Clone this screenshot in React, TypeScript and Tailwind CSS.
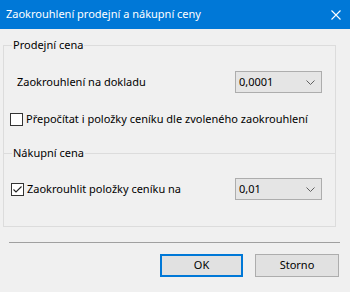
import React from "react";

function Chevron() {
  return (
    <svg width="9" height="5" viewBox="0 0 9 5" className="shrink-0">
      <path d="M0.5 0.5 L4.5 4.5 L8.5 0.5" fill="none" stroke="#606060" strokeWidth="1" />
    </svg>
  );
}

function Combo({ value }: { value: string }) {
  return (
    <div className="flex items-center justify-between w-[87px] h-[22px] border border-[#adadad] bg-[#e5e5e5] pl-[3px] pr-[6px] text-black">
      <span>{value}</span>
      <Chevron />
    </div>
  );
}

function Check({ checked }: { checked?: boolean }) {
  return (
    <div className="w-[13px] h-[13px] border border-[#333333] bg-white flex items-center justify-center shrink-0">
      {checked && (
        <svg width="11" height="11" viewBox="0 0 11 11">
          <path d="M1.5 5.5 L4 8 L9.5 2.5" fill="none" stroke="#222" strokeWidth="1.1" />
        </svg>
      )}
    </div>
  );
}

export default function App() {
  return (
    <div
      className="w-[350px] h-[292px] bg-[#f0f0f0] text-[11px] text-black overflow-hidden flex flex-col"
      style={{ fontFamily: '"Noto Sans", "Liberation Sans", sans-serif' }}
    >
      {/* title bar */}
      <div className="h-[29px] bg-[#0078d7] flex items-center justify-between pl-[6px] pr-[9px] text-white shrink-0">
        <span>Zaokrouhlení prodejní a nákupní ceny</span>
        <svg width="10" height="10" viewBox="0 0 10 10">
          <path d="M0.5 0.5 L9.5 9.5 M9.5 0.5 L0.5 9.5" stroke="white" strokeWidth="1.1" />
        </svg>
      </div>

      <fieldset className="mt-[8px] ml-[3px] w-[333px] border border-[#dcdcdc] px-0 pb-[26px]">
        <legend className="ml-[8px] px-[1px] leading-[16px]">Prodejní cena</legend>

        <div className="flex items-center justify-between mt-[18px] pl-[13px] pr-[13px] h-[22px]">
          <span>Zaokrouhlení na dokladu</span>
          <Combo value="0,0001" />
        </div>

        <div className="flex items-center gap-[3px] mt-[20px] pl-[6px] h-[13px]">
          <Check />
          <span>Přepočítat i položky ceníku dle zvoleného zaokrouhlení</span>
        </div>

        <div className="flex items-center mt-[19px] h-[16px]">
          <div className="w-[8px] h-px bg-[#dcdcdc]" />
          <span className="px-[1px]">Nákupní cena</span>
          <div className="flex-1 h-px bg-[#dcdcdc]" />
        </div>

        <div className="flex items-center justify-between mt-[17px] pl-[7px] pr-[13px] h-[22px]">
          <div className="flex items-center gap-[3px]">
            <Check checked />
            <span>Zaokrouhlit položky ceníku na</span>
          </div>
          <Combo value="0,01" />
        </div>
      </fieldset>

      <div className="mt-[15px] ml-[9px] w-[331px] h-px bg-[#a0a0a0]" />

      <div className="flex justify-end gap-[12px] mt-[11px] pr-[11px]">
        <button className="w-[83px] h-[23px] border-2 border-[#0078d7] bg-[#e1e1e1]">OK</button>
        <button className="w-[84px] h-[23px] border border-[#adadad] bg-[#e1e1e1]">Storno</button>
      </div>
    </div>
  );
}
